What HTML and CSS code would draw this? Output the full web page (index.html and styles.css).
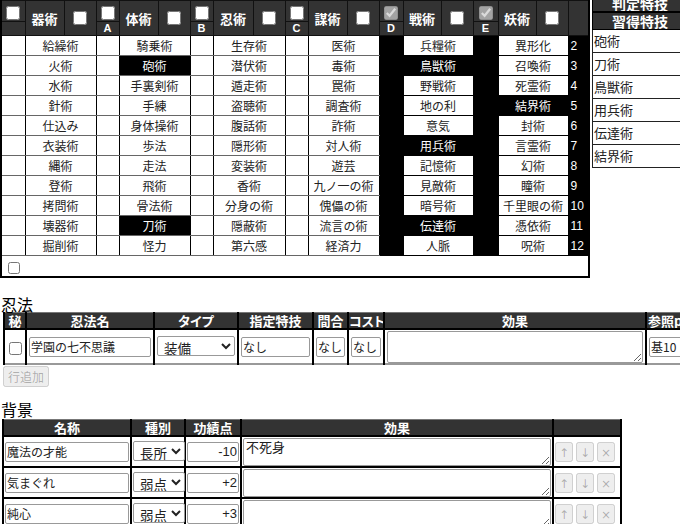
FILE: index.html
```html
<!DOCTYPE html>
<html lang="ja">
<head>
  <meta charset="UTF-8" />
  <title>忍者シート</title>
  <link rel="stylesheet" href="styles.css">
</head>
<body>

<div class="top">
  <table class="skills">
    <colgroup>
      <col style="width:24px"><col style="width:71px">
      <col style="width:23px"><col style="width:71px">
      <col style="width:23px"><col style="width:72px">
      <col style="width:23px"><col style="width:71px">
      <col style="width:24px"><col style="width:70px">
      <col style="width:25px"><col style="width:70px">
      <col style="width:21px">
    </colgroup>
    <thead>
      <tr>
        <th class="gap-chk"><input type="checkbox"></th>
        <th class="field" rowspan="2"><div class="field-head"><span class="field-name">器術</span><span class="field-chk"><input type="checkbox"></span></div></th>
        <th class="gap-chk"><input type="checkbox"></th>
        <th class="field" rowspan="2"><div class="field-head"><span class="field-name">体術</span><span class="field-chk"><input type="checkbox"></span></div></th>
        <th class="gap-chk"><input type="checkbox"></th>
        <th class="field" rowspan="2"><div class="field-head"><span class="field-name">忍術</span><span class="field-chk"><input type="checkbox"></span></div></th>
        <th class="gap-chk"><input type="checkbox"></th>
        <th class="field" rowspan="2"><div class="field-head"><span class="field-name">謀術</span><span class="field-chk"><input type="checkbox"></span></div></th>
        <th class="gap-chk"><input type="checkbox" checked disabled></th>
        <th class="field" rowspan="2"><div class="field-head"><span class="field-name">戦術</span><span class="field-chk"><input type="checkbox"></span></div></th>
        <th class="gap-chk"><input type="checkbox" checked disabled></th>
        <th class="field" rowspan="2"><div class="field-head"><span class="field-name">妖術</span><span class="field-chk"><input type="checkbox"></span></div></th>
        <th class="num-head" rowspan="2"></th>
      </tr>
      <tr>
        <th class="gap-letter"></th>
        <th class="gap-letter">A</th>
        <th class="gap-letter">B</th>
        <th class="gap-letter">C</th>
        <th class="gap-letter">D</th>
        <th class="gap-letter">E</th>
      </tr>
    </thead>
    <tbody>
      <tr><td></td><td>給繰術</td><td></td><td>騎乗術</td><td></td><td>生存術</td><td></td><td>医術</td><td class="fill"></td><td>兵糧術</td><td class="fill"></td><td>異形化</td><td class="num">2</td></tr>
      <tr><td></td><td>火術</td><td></td><td class="on">砲術</td><td></td><td>潜伏術</td><td></td><td>毒術</td><td class="fill"></td><td class="on">鳥獣術</td><td class="fill"></td><td>召喚術</td><td class="num">3</td></tr>
      <tr><td></td><td>水術</td><td></td><td>手裏剣術</td><td></td><td>遁走術</td><td></td><td>罠術</td><td class="fill"></td><td>野戦術</td><td class="fill"></td><td>死霊術</td><td class="num">4</td></tr>
      <tr><td></td><td>針術</td><td></td><td>手練</td><td></td><td>盗聴術</td><td></td><td>調査術</td><td class="fill"></td><td>地の利</td><td class="fill"></td><td class="on">結界術</td><td class="num">5</td></tr>
      <tr><td></td><td>仕込み</td><td></td><td>身体操術</td><td></td><td>腹話術</td><td></td><td>詐術</td><td class="fill"></td><td>意気</td><td class="fill"></td><td>封術</td><td class="num">6</td></tr>
      <tr><td></td><td>衣装術</td><td></td><td>歩法</td><td></td><td>隠形術</td><td></td><td>対人術</td><td class="fill"></td><td class="on">用兵術</td><td class="fill"></td><td>言霊術</td><td class="num">7</td></tr>
      <tr><td></td><td>縄術</td><td></td><td>走法</td><td></td><td>変装術</td><td></td><td>遊芸</td><td class="fill"></td><td>記憶術</td><td class="fill"></td><td>幻術</td><td class="num">8</td></tr>
      <tr><td></td><td>登術</td><td></td><td>飛術</td><td></td><td>香術</td><td></td><td>九ノ一の術</td><td class="fill"></td><td>見敵術</td><td class="fill"></td><td>瞳術</td><td class="num">9</td></tr>
      <tr><td></td><td>拷問術</td><td></td><td>骨法術</td><td></td><td>分身の術</td><td></td><td>傀儡の術</td><td class="fill"></td><td>暗号術</td><td class="fill"></td><td>千里眼の術</td><td class="num">10</td></tr>
      <tr><td></td><td>壊器術</td><td></td><td class="on">刀術</td><td></td><td>隠蔽術</td><td></td><td>流言の術</td><td class="fill"></td><td class="on">伝達術</td><td class="fill"></td><td>憑依術</td><td class="num">11</td></tr>
      <tr><td></td><td>掘削術</td><td></td><td>怪力</td><td></td><td>第六感</td><td></td><td>経済力</td><td class="fill"></td><td>人脈</td><td class="fill"></td><td>呪術</td><td class="num">12</td></tr>
      <tr class="foot"><td colspan="13"><input type="checkbox"></td></tr>
    </tbody>
  </table>

  <div class="side">
    <div class="side-head">判定特技</div>
    <div class="side-head second">習得特技</div>
    <ul class="learned">
      <li>砲術</li>
      <li>刀術</li>
      <li>鳥獣術</li>
      <li>用兵術</li>
      <li>伝達術</li>
      <li>結界術</li>
    </ul>
  </div>
</div>

<h2 class="sec-title ninpo-title">忍法</h2>
<table class="ninpo">
  <colgroup>
    <col style="width:22px"><col style="width:128px"><col style="width:84px"><col style="width:75px">
    <col style="width:35px"><col style="width:36px"><col style="width:262px"><col style="width:41px">
  </colgroup>
  <thead>
    <tr><th>秘</th><th>忍法名</th><th>タイプ</th><th>指定特技</th><th>間合</th><th>コスト</th><th>効果</th><th class="ref">参照p</th></tr>
  </thead>
  <tbody>
    <tr>
      <td class="c"><input type="checkbox"></td>
      <td><input type="text" value="学園の七不思議"></td>
      <td><select><option>装備</option><option>攻撃</option><option>サポート</option></select></td>
      <td><input type="text" value="なし"></td>
      <td><input type="text" value="なし"></td>
      <td><input type="text" value="なし"></td>
      <td><textarea></textarea></td>
      <td><input type="text" value="基10"></td>
    </tr>
  </tbody>
</table>
<button class="add-row" disabled>行追加</button>

<h2 class="sec-title bg-title">背景</h2>
<table class="bg">
  <colgroup>
    <col style="width:128px"><col style="width:54px"><col style="width:56px"><col style="width:312px"><col style="width:68px">
  </colgroup>
  <thead>
    <tr><th>名称</th><th>種別</th><th>功績点</th><th>効果</th><th></th></tr>
  </thead>
  <tbody>
    <tr>
      <td><input type="text" value="魔法の才能"></td>
      <td><select><option>長所</option><option>弱点</option></select></td>
      <td><input type="text" class="pt" value="-10"></td>
      <td><textarea>不死身</textarea></td>
      <td class="moves"><button disabled>↑</button><button disabled>↓</button><button disabled>×</button></td>
    </tr>
    <tr>
      <td><input type="text" value="気まぐれ"></td>
      <td><select><option>弱点</option><option>長所</option></select></td>
      <td><input type="text" class="pt" value="+2"></td>
      <td><textarea></textarea></td>
      <td class="moves"><button disabled>↑</button><button disabled>↓</button><button disabled>×</button></td>
    </tr>
    <tr>
      <td><input type="text" value="純心"></td>
      <td><select><option>弱点</option><option>長所</option></select></td>
      <td><input type="text" class="pt" value="+3"></td>
      <td><textarea></textarea></td>
      <td class="moves"><button disabled>↑</button><button disabled>↓</button><button disabled>×</button></td>
    </tr>
  </tbody>
</table>

</body>
</html>
```

FILE: styles.css
```css
html, body {
  overflow: hidden;
}

body {
  margin: 0;
  font-family: "Noto Sans CJK JP", "Noto Sans", sans-serif;
  font-size: 12px;
  color: #222;
  background: #fff;
}

input[type="checkbox"] {
  width: 14px;
  height: 14px;
  margin: 0;
  vertical-align: middle;
}

/* 特技表 */
.top {
  display: flex;
  align-items: flex-start;
  gap: 2px;
}

.skills {
  border-collapse: collapse;
  table-layout: fixed;
  width: 589px;
  border: 2px solid #000;
  border-top: 0;
  flex: none;
}

.skills th {
  background: #333;
  color: #fff;
  padding: 0;
  border: 1px solid #111;
  font-weight: bold;
}

.skills .gap-chk {
  height: 20px;
}

.skills .gap-letter {
  height: 13px;
  font-size: 11px;
  line-height: 13px;
  font-family: "Liberation Sans", sans-serif;
}

.field-head {
  display: flex;
  height: 34px;
}

.field-name {
  flex: 1;
  display: flex;
  align-items: center;
  justify-content: center;
  font-size: 13px;
}

.field-chk {
  width: 31px;
  border-left: 1px solid #111;
  display: flex;
  align-items: center;
  justify-content: center;
}

.skills td {
  height: 19px;
  padding: 0;
  border: 1px solid #000;
  border-top-color: #666;
  border-bottom-color: #666;
  text-align: center;
  line-height: 18px;
  white-space: nowrap;
  overflow: hidden;
}

.skills td:nth-child(10),
.skills td:nth-child(12) {
  border-top-color: #000;
  border-bottom-color: #000;
}

.skills td.fill {
  background: #000;
  border-color: #000;
}

.skills td.on {
  background: #000;
  color: #fff;
}

.skills td.num {
  background: #000;
  color: #fff;
  border-color: #000;
  text-align: left;
  padding-left: 2px;
  font-family: "Liberation Sans", sans-serif;
}

.skills .foot td {
  text-align: left;
  padding-left: 6px;
  height: 20px;
  border-color: #000;
}

.skills .foot input {
  width: 12px;
  height: 12px;
}

/* 判定特技 */
.side {
  width: 96px;
  flex: none;
  margin-top: -5px;
}

.side-head {
  background: #333;
  color: #fff;
  font-weight: bold;
  font-size: 14px;
  text-align: center;
  height: 15px;
  line-height: 16px;
  border: 1px solid #000;
  border-bottom: 0;
  overflow: hidden;
}

.side-head.second {
  border-top: 2px solid #000;
  border-bottom: 1px solid #000;
  height: 16px;
}

.learned {
  list-style: none;
  margin: 0;
  padding: 0;
}

.learned li {
  height: 22px;
  line-height: 22px;
  font-size: 13px;
  padding-left: 1px;
  border: 1px solid #222;
  border-top: 0;
}

/* 忍法・背景 */
.sec-title {
  font-size: 16px;
  font-weight: normal;
  line-height: 16px;
  margin: 0;
  padding-left: 1px;
  color: #000;
}

.ninpo-title {
  margin-top: 18px;
}

.bg-title {
  margin-top: 14px;
}

.ninpo, .bg {
  border-collapse: collapse;
  table-layout: fixed;
}

.ninpo th, .bg th {
  background: #333;
  color: #fff;
  font-size: 13px;
  font-weight: bold;
  font-feature-settings: "palt";
  padding: 0;
  height: 15px;
  line-height: 15px;
  border: 2px solid #000;
  border-top: 1px solid #777;
  white-space: nowrap;
  overflow: hidden;
}

.ninpo {
  width: 683px;
  margin-left: 3px;
  border-bottom: 2px solid #999;
}

.ninpo th.ref {
  text-align: left;
  padding-left: 1px;
}

.ninpo td {
  height: 33px;
  padding: 0 2px;
  border: 2px solid #000;
  border-bottom: 0;
  vertical-align: middle;
}

.ninpo td.c {
  text-align: center;
  padding: 0;
}

.ninpo input[type="checkbox"] {
  width: 13px;
  height: 13px;
}

input[type="text"], select, textarea {
  box-sizing: border-box;
  width: 100%;
  font-family: inherit;
  font-size: 12px;
  color: #222;
  border: 1px solid #999;
  border-radius: 2px;
  margin: 0;
}

input[type="text"] {
  height: 20px;
  padding: 0 1px;
}

select {
  height: 20px;
  font-size: 13.5px;
  padding: 0 0 0 2px;
  background: #fff;
}

textarea {
  display: block;
  resize: vertical;
  font-size: 13px;
  line-height: 14px;
  padding: 1px 2px;
}

.ninpo textarea {
  height: 32px;
}

.add-row {
  display: block;
  margin: 1px 0 0 3px;
  height: 21px;
  padding: 0 3px;
  font-family: inherit;
  font-size: 12px;
}

.bg {
  width: 618px;
  margin-left: 2px;
  margin-top: 2px;
}

.bg td {
  height: 29px;
  padding: 0 1px;
  border: 2px solid #000;
  vertical-align: middle;
}

.bg input.pt {
  text-align: right;
  font-size: 13px;
  font-family: "Liberation Sans", sans-serif;
}

.bg select {
  width: 52px;
}

.bg textarea {
  height: 28px;
}

.moves {
  white-space: nowrap;
  padding-left: 3px;
}

.moves button {
  width: 18px;
  height: 20px;
  padding: 0;
  margin-right: 3px;
  font-family: "DejaVu Sans", sans-serif;
  font-size: 12px;
  line-height: 18px;
  vertical-align: middle;
}
```
